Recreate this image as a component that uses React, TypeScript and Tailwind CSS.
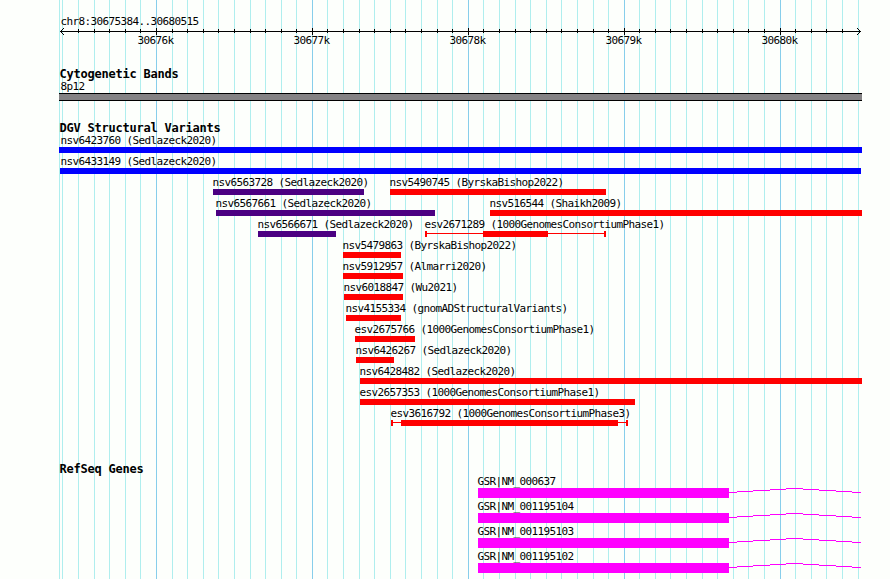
type Feature = {
  name: string;
  source: string;
  labelX: number;
  start: number;
  end: number;
  color: string;
  // thick part of a call with uncertain breakpoints
  inner?: [number, number];
};

const GRID = [
  59, 62, 78, 94, 109, 125, 140, 156, 172, 187, 203, 218, 234, 250, 265, 281, 296, 312, 327, 343,
  359, 374, 390, 405, 421, 437, 452, 468, 483, 499, 515, 530, 546, 561, 577, 593, 608, 624, 639,
  655, 670, 686, 702, 717, 733, 748, 764, 780, 795, 811, 826, 842, 858,
];

const MAJOR = [
  { x: 156, label: "30676k" },
  { x: 312, label: "30677k" },
  { x: 468, label: "30678k" },
  { x: 624, label: "30679k" },
  { x: 780, label: "30680k" },
];

const isMajor = (x: number) => MAJOR.some((m) => m.x === x);

const BLUE = "bg-[#0000ff]";
const PURPLE = "bg-[#4b0082]";
const RED = "bg-[#ff0000]";

const VARIANTS: Feature[][] = [
  [{ name: "nsv6423760", source: "Sedlazeck2020", labelX: 60.5, start: 59, end: 862, color: BLUE }],
  [{ name: "nsv6433149", source: "Sedlazeck2020", labelX: 60.5, start: 60, end: 861, color: BLUE }],
  [
    { name: "nsv6563728", source: "Sedlazeck2020", labelX: 212.5, start: 213, end: 364, color: PURPLE },
    { name: "nsv5490745", source: "ByrskaBishop2022", labelX: 389.5, start: 390, end: 606, color: RED },
  ],
  [
    { name: "nsv6567661", source: "Sedlazeck2020", labelX: 215.5, start: 216, end: 435, color: PURPLE },
    { name: "nsv516544", source: "Shaikh2009", labelX: 489.5, start: 490, end: 862, color: RED },
  ],
  [
    { name: "nsv6566671", source: "Sedlazeck2020", labelX: 257.5, start: 258, end: 336, color: PURPLE },
    { name: "esv2671289", source: "1000GenomesConsortiumPhase1", labelX: 424.5, start: 425, end: 606, color: RED, inner: [483, 548] },
  ],
  [{ name: "nsv5479863", source: "ByrskaBishop2022", labelX: 342.5, start: 343, end: 401, color: RED }],
  [{ name: "nsv5912957", source: "Almarri2020", labelX: 342.5, start: 343, end: 403, color: RED }],
  [{ name: "nsv6018847", source: "Wu2021", labelX: 343.5, start: 344, end: 403, color: RED }],
  [{ name: "nsv4155334", source: "gnomADStructuralVariants", labelX: 345.5, start: 346, end: 401, color: RED }],
  [{ name: "esv2675766", source: "1000GenomesConsortiumPhase1", labelX: 354.5, start: 355, end: 415, color: RED }],
  [{ name: "nsv6426267", source: "Sedlazeck2020", labelX: 355.5, start: 356, end: 394, color: RED }],
  [{ name: "nsv6428482", source: "Sedlazeck2020", labelX: 359.5, start: 360, end: 862, color: RED }],
  [{ name: "esv2657353", source: "1000GenomesConsortiumPhase1", labelX: 359.5, start: 360, end: 635, color: RED }],
  [{ name: "esv3616792", source: "1000GenomesConsortiumPhase3", labelX: 390.5, start: 391, end: 628, color: RED, inner: [401, 618] }],
];

const GENES = ["GSR|NM_000637", "GSR|NM_001195104", "GSR|NM_001195103", "GSR|NM_001195102"];

const Grid = () => (
  <svg className="absolute inset-0" width="890" height="579" shapeRendering="crispEdges" aria-hidden>
    {GRID.map((x) => (
      <rect key={x} x={x} y="0" width="1" height="579" fill={isMajor(x) ? "#87ceeb" : "#afeeee"} />
    ))}
  </svg>
);

const Heading = ({ children }: { children: string }) => (
  <h2 className="h-[13px] pl-[59.5px] text-[12px] leading-[12px] font-bold tracking-[-0.225px] whitespace-pre">
    {children}
  </h2>
);

const Axis = () => (
  <div>
    <p className="h-3 pl-[60.5px]">chr8:30675384..30680515</p>
    <svg className="block" width="890" height="7" shapeRendering="crispEdges" aria-hidden>
      <rect x="60" y="3" width="801" height="1" />
      {GRID.filter((x) => x > 62 && x < 858).map((x) => (
        <rect key={x} x={x} y={isMajor(x) ? 0 : 1} width="1" height={isMajor(x) ? 7 : 4} />
      ))}
      <path d="M63 0h1v1h-1zM62 1h1v1h-1zM61 2h1v1h-1zM61 4h1v1h-1zM62 5h1v1h-1zM63 6h1v1h-1z" />
      <path d="M857 0h1v1h-1zM858 1h1v1h-1zM859 2h1v1h-1zM859 4h1v1h-1zM858 5h1v1h-1zM857 6h1v1h-1z" />
    </svg>
    <div className="flex h-[13px] gap-[120px] pl-[137.5px]">
      {MAJOR.map((m) => (
        <span key={m.x} className="w-9">{m.label}</span>
      ))}
    </div>
  </div>
);

const Variant = ({ name, source, labelX, start, end, color, inner }: Feature) => (
  <>
    <span className="absolute top-0" style={{ left: labelX }}>{`${name} (${source})`}</span>
    {inner ? (
      <div className="absolute top-3 flex h-1.5" style={{ left: start, width: end - start }}>
        <div className={`w-0.5 ${color}`} />
        <div className={`mt-0.5 h-px ${color}`} style={{ width: inner[0] - start - 2 }} />
        <div className={color} style={{ width: inner[1] - inner[0] }} />
        <div className={`mt-0.5 h-px grow ${color}`} />
        <div className={`w-0.5 ${color}`} />
      </div>
    ) : (
      <div className={`absolute top-3 h-1.5 ${color}`} style={{ left: start, width: end - start }} />
    )}
  </>
);

const Gene = ({ name }: { name: string }) => (
  <div className="h-[25px] pl-[478px]">
    <p className="-ml-[0.5px] h-3">{name}</p>
    <div className="flex">
      <div className="h-2.5 w-[251px] bg-[#ff00ff]" />
      <svg width="132" height="10" fill="#ff00ff" shapeRendering="crispEdges" aria-hidden>
        <path d="M0 4h8v1h-8zM8 3h16v1h-16zM24 2h17v1h-17zM41 1h16v1h-16zM57 0h17v1h-17zM74 1h16v1h-16zM90 2h17v1h-17zM107 3h16v1h-16zM123 4h9v1h-9z" />
      </svg>
    </div>
  </div>
);

const App = () => (
  <main className="relative h-[579px] w-[890px] overflow-hidden bg-[#fdfffc] font-['DejaVu_Sans_Mono',monospace] text-[11px] leading-[11px] tracking-[-0.622px] whitespace-pre text-black">
    <Grid />
    <div className="relative flex flex-col pt-4">
      <Axis />
      <section className="pt-5">
        <Heading>Cytogenetic Bands</Heading>
        <p className="h-3 pl-[60.5px]">8p12</p>
        <div className="ml-[59px] h-2 w-[803px] border-y border-black bg-[#848284]" />
      </section>
      <section className="pt-[21px]">
        <Heading>DGV Structural Variants</Heading>
        {VARIANTS.map((row) => (
          <div key={row[0].name} className="relative h-[21px]">
            {row.map((f) => (
              <Variant key={f.name} {...f} />
            ))}
          </div>
        ))}
      </section>
      <section className="pt-[34px]">
        <Heading>RefSeq Genes</Heading>
        {GENES.map((name) => (
          <Gene key={name} name={name} />
        ))}
      </section>
    </div>
  </main>
);

export default App;
